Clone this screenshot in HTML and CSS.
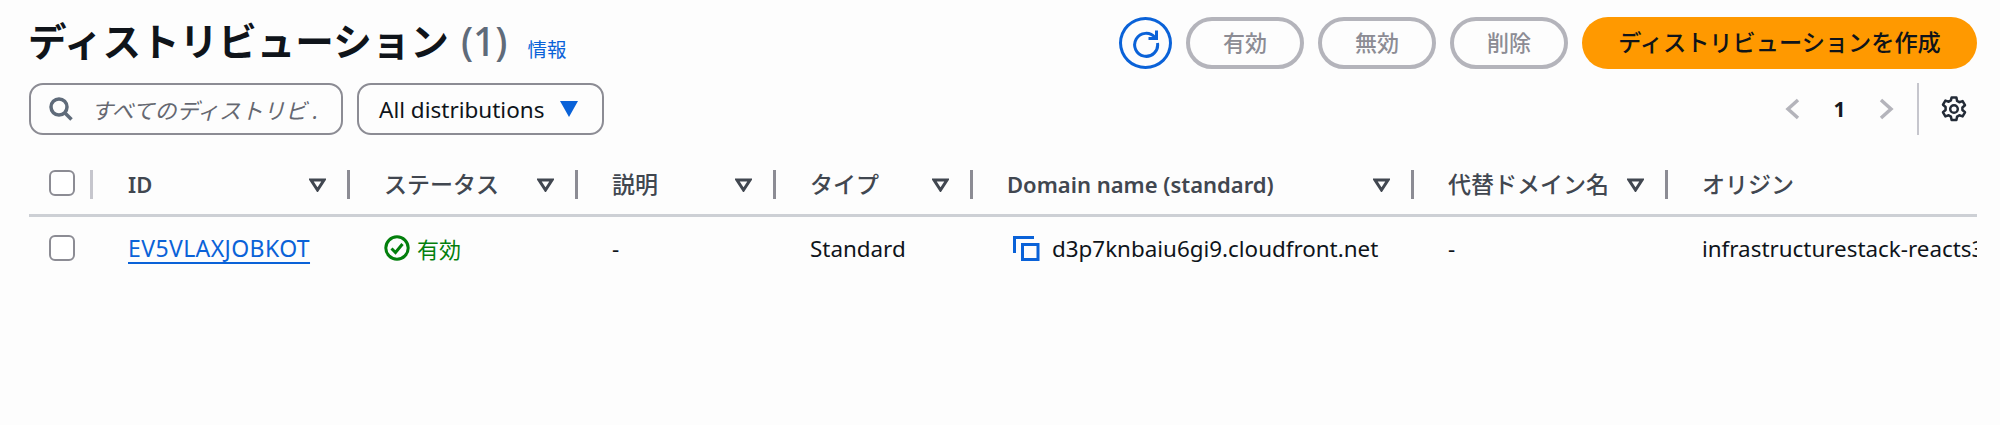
FILE: index.html
```html
<!DOCTYPE html>
<html lang="ja">
<head>
<meta charset="utf-8">
<title>ディストリビューション</title>
<link rel="stylesheet" href="styles.css">
</head>
<body>
<main class="page">
  <header class="top">
    <div class="heading">
      <h1 class="title">ディストリビューション</h1>
      <span class="count">(1)</span>
      <a class="info" href="#">情報</a>
    </div>
    <div class="actions">
      <button class="refresh" type="button" aria-label="refresh">
        <svg class="refresh-icon" viewBox="0 0 30 30"><path d="M24 9.500A11.500 11.500 0 1 0 26.500 15"/><path d="M25.500 2.500v8h-8"/></svg>
      </button>
      <button class="btn" type="button"><span class="btn-text">有効</span></button>
      <button class="btn" type="button"><span class="btn-text">無効</span></button>
      <button class="btn" type="button"><span class="btn-text">削除</span></button>
      <button class="primary" type="button"><span class="btn-text">ディストリビューションを作成</span></button>
    </div>
  </header>

  <div class="filters">
    <div class="search">
      <svg class="search-icon" viewBox="0 0 24 24"><circle cx="10" cy="10" r="8"/><path d="M15.500 15.500l7 7"/></svg>
      <span class="placeholder">すべてのディストリビ .</span>
    </div>
    <div class="select">
      <span>All distributions</span>
      <svg class="caret" viewBox="0 0 18 16"><path d="M0 0h18L9 16z"/></svg>
    </div>
    <nav class="pager">
      <svg class="chev" viewBox="0 0 15 22"><path d="M13 2L3 11l10 9"/></svg>
      <span class="pagenum">1</span>
      <svg class="chev" viewBox="0 0 15 22"><path d="M2 2l10 9-10 9"/></svg>
      <span class="pager-sep"></span>
      <svg class="gear" viewBox="0 0 26 26"><circle cx="13" cy="13" r="3.800"/><path d="M10.600 1.500h4.800l.7 3.400 2.200 1.300 3.300-1.100 2.400 4.100-2.600 2.300v2.500l2.600 2.300-2.400 4.100-3.300-1.100-2.200 1.300-.7 3.400h-4.800l-.7-3.400-2.200-1.300-3.300 1.100-2.400-4.100 2.600-2.300V11l-2.600-2.300 2.400-4.100 3.300 1.100 2.200-1.300z"/></svg>
    </nav>
  </div>

  <section class="table">
    <div class="row head">
      <div class="cell check"><span class="box"></span><span class="sep light"></span></div>
      <div class="cell id-cell"><span class="label latin">ID</span><svg class="tri" viewBox="0 0 17 14"><path d="M2 2h13L8.500 12z"/></svg><span class="sep"></span></div>
      <div class="cell"><span class="label">ステータス</span><svg class="tri" viewBox="0 0 17 14"><path d="M2 2h13L8.500 12z"/></svg><span class="sep"></span></div>
      <div class="cell"><span class="label">説明</span><svg class="tri" viewBox="0 0 17 14"><path d="M2 2h13L8.500 12z"/></svg><span class="sep"></span></div>
      <div class="cell"><span class="label">タイプ</span><svg class="tri" viewBox="0 0 17 14"><path d="M2 2h13L8.500 12z"/></svg><span class="sep"></span></div>
      <div class="cell"><span class="label latin">Domain name (standard)</span><svg class="tri" viewBox="0 0 17 14"><path d="M2 2h13L8.500 12z"/></svg><span class="sep"></span></div>
      <div class="cell"><span class="label">代替ドメイン名</span><svg class="tri" viewBox="0 0 17 14"><path d="M2 2h13L8.500 12z"/></svg><span class="sep"></span></div>
      <div class="cell"><span class="label">オリジン</span></div>
    </div>
    <div class="row body">
      <div class="cell check"><span class="box"></span></div>
      <div class="cell id-cell"><a class="link" href="#">EV5VLAXJOBKOT</a></div>
      <div class="cell status">
        <svg class="ok" viewBox="0 0 26 26"><circle cx="13" cy="13" r="11.200"/><path d="M7.500 13.500l4 4 7-8.500"/></svg>
        <span>有効</span>
      </div>
      <div class="cell">-</div>
      <div class="cell">Standard</div>
      <div class="cell domain">
        <svg class="copy" viewBox="0 0 27 25"><path d="M1.500 17V1.500H21"/><path d="M9.500 8.500h15.500v15H9.500z"/></svg>
        <span>d3p7knbaiu6gi9.cloudfront.net</span>
      </div>
      <div class="cell">-</div>
      <div class="cell clip">infrastructurestack-reacts3bucket</div>
    </div>
  </section>
</main>
</body>
</html>
```
FILE: styles.css
```css
* { box-sizing: border-box; }
html, body { margin: 0; height: 100%; }
body {
  background: #fdfdfd;
  color: #16191f;
  font-family: "Noto Sans", "Noto Sans CJK JP", sans-serif;
  overflow: hidden;
}
.page { padding: 17px 23px 0 29px; width: 2000px; }

.top { display: flex; justify-content: space-between; align-items: flex-start; height: 66px; }
.heading { display: flex; align-items: baseline; margin-top: -1px; margin-left: -1px; }
.title { margin: 0; font-size: 38.600px; font-weight: 700; line-height: 50px; color: #0f141a; }
.count { margin-left: 12px; font-size: 39px; font-weight: 500; line-height: 50px; color: #5f6b7a; }
.info { align-self: flex-start; margin: 19px 0 0 20px; font-size: 19.500px; line-height: 30px; color: #0a62d8; text-decoration: none; }

.actions { display: flex; gap: 14px; }
.refresh {
  width: 53px; height: 52px; padding: 0;
  border: 3px solid #0a62d8; border-radius: 50%;
  background: transparent;
  display: flex; align-items: center; justify-content: center;
}
.refresh-icon { width: 30px; height: 30px; fill: none; stroke: #0a62d8; stroke-width: 3; }
.btn {
  width: 118px; height: 52px; padding: 0;
  border: 4px solid #b4b4bb; border-radius: 26px;
  background: transparent; color: #8c8c94;
  font: 500 22px "Noto Sans CJK JP", sans-serif;
}
.primary {
  width: 395px; height: 52px; padding: 0;
  border: 0; border-radius: 26px;
  background: #ff9900; color: #0f141a;
  font: 500 23.200px "Noto Sans CJK JP", sans-serif;
}
.btn-text { display: block; margin-top: -4px; }

.filters { display: flex; gap: 14px; height: 52px; }
.search, .select {
  height: 52px;
  border: 2px solid #8c8c94; border-radius: 14px;
  display: flex; align-items: center;
}
.search { width: 314px; padding-left: 18px; }
.search-icon { width: 24px; height: 24px; fill: none; stroke: #5f6b7a; stroke-width: 3.500; flex: none; }
.placeholder { margin-left: 18px; font-size: 22px; font-style: italic; color: #656871; white-space: nowrap; }
.select { width: 247px; padding: 0 20px; justify-content: space-between; font-size: 22.500px; color: #0f141a; }
.caret { width: 18px; height: 16px; fill: #0a62d8; margin-right: 4px; margin-top: -1px; }

.pager { margin-left: auto; display: flex; align-items: center; }
.chev { width: 15px; height: 22px; fill: none; stroke: #b4b4bb; stroke-width: 3.500; }
.pagenum { width: 79px; text-align: center; font-size: 21px; font-weight: 700; }
.pager-sep { width: 2px; height: 52px; background: #c6c6cd; margin: 0 22px 0 23px; }
.gear { width: 26px; height: 26px; fill: none; stroke: #232b37; stroke-width: 2.500; stroke-linejoin: round; margin-right: 10px; }

.table { margin-top: 35px; width: 1948px; }
.row {
  display: grid;
  grid-template-columns: 64px 257px 228px 198px 197px 441px 254px 309px;
}
.head { height: 47px; border-bottom: 3px solid #cdd0d5; color: #414750; }
.body { height: 62px; font-size: 22.400px; color: #0f141a; }
.cell { display: flex; align-items: center; padding-left: 34px; min-width: 0; white-space: nowrap; }
.id-cell { padding-left: 35px; }
.head .cell { align-items: flex-start; height: 29px; }
.check { padding-left: 20px; }
.box { width: 26px; height: 26px; border: 2px solid #8c8c94; border-radius: 6px; background: #fff; flex: none; }
.label { font-size: 23px; font-weight: 500; line-height: 29px; }
.label.latin { font-size: 22px; font-weight: 600; }
.tri { width: 17px; height: 14px; fill: none; stroke: #414750; stroke-width: 3; margin: 8px 0 0 auto; flex: none; }
.sep { width: 3px; height: 29px; background: #8c8c94; margin-left: 21px; flex: none; }
.sep.light { background: #c6c6cd; margin-left: auto; }
.link { color: #0a62d8; font-size: 23px; letter-spacing: 0.400px; text-decoration: underline; text-decoration-thickness: 2px; text-underline-offset: 5px; }
.status { color: #037f0c; font-size: 22px; }
.status span { font-family: "Noto Sans CJK JP", sans-serif; margin-left: 7px; }
.ok { width: 26px; height: 26px; fill: none; stroke: #037f0c; stroke-width: 3; flex: none; }
.domain { padding-left: 40px; }
.copy { width: 27px; height: 25px; fill: none; stroke: #0a62d8; stroke-width: 3; flex: none; margin-right: 12px; }
.clip { overflow: hidden; }
```
